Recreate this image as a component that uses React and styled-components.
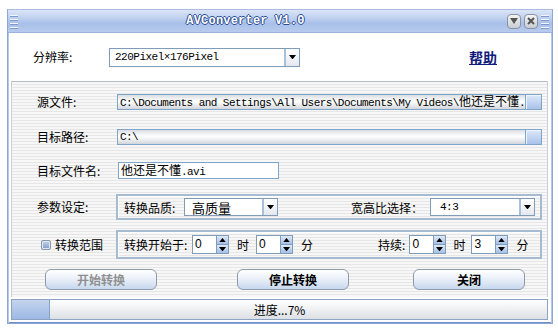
import React from "react";
import styled, { createGlobalStyle } from "styled-components";

const Global = createGlobalStyle`
  html, body {
    margin: 0;
    padding: 0;
    background: #ffffff;
  }
  body {
    font-family: "Noto Sans CJK SC", "Liberation Sans", sans-serif;
    font-size: 12px;
    color: #000;
  }
`;

const Page = styled.div`
  padding: 9px 0 0 7px;
  width: 558px;
  height: 328px;
  box-sizing: border-box;
`;

const Window = styled.div`
  width: 546px;
  height: 315px;
  box-sizing: border-box;
  border: 1px solid #8ea6d6;
  border-top-color: #a9bbe0;
  display: flex;
  flex-direction: column;
  background: #fff;
  box-shadow: inset 0 -1px 0 #6f8cc8;
`;

const TitleBar = styled.div`
  height: 22px;
  flex: none;
  display: flex;
  align-items: center;
  padding: 0 3px 0 2px;
  background: linear-gradient(#dbe5f7 0%, #bccfef 40%, #a8bfe9 60%, #b8cbee 100%);
  border-bottom: 1px solid #9bb2df;
`;

const Grip = styled.div`
  width: 8px;
  height: 14px;
  margin-top: 2px;
  background: repeating-linear-gradient(
    to bottom,
    #f2f6fd 0 1px,
    #7f99cc 1px 2px,
    transparent 2px 4px
  );
`;

const Title = styled.div`
  flex: 1;
  text-align: center;
  font-family: "Liberation Mono", monospace;
  font-weight: bold;
  font-size: 12px;
  color: #ffffff;
  letter-spacing: 0.2px;
  padding-right: 34px;
  text-shadow: 1px 0 0 #2a4d94, -1px 0 0 #2a4d94, 0 1px 0 #2a4d94, 0 -1px 0 #2a4d94;
`;

const CapButton = styled.div`
  width: 12px;
  height: 13px;
  margin-right: 3px;
  border-radius: 4px;
  border: 1px solid #8a93a3;
  background: linear-gradient(#f4f4f4, #c7ccd4);
  display: flex;
  align-items: center;
  justify-content: center;
`;

const Body = styled.div`
  flex: 1;
  display: flex;
  flex-direction: column;
  padding: 0 3px 3px 2px;
  border-left: 1px solid #b7c7e6;
  border-right: 1px solid #b7c7e6;
`;

const TopSection = styled.div`
  height: 48px;
  flex: none;
  display: flex;
  align-items: center;
  padding: 0 51px 0 22px;
  background: #fff;
`;

const Label = styled.div`
  width: ${(p) => p.$w || 76}px;
  flex: none;
  font-size: 12px;
  line-height: 16px;
  white-space: nowrap;
  padding-left: ${(p) => p.$pad || 0}px;
  box-sizing: border-box;
  display: flex;
  align-items: center;
`;

const Select = styled.div`
  width: ${(p) => p.$w}px;
  height: ${(p) => p.$h || 18}px;
  box-sizing: border-box;
  border: 1px solid #7f9db9;
  background: #fff;
  display: flex;
  align-items: center;
  flex: none;
`;

const SelectText = styled.div`
  flex: 1;
  padding-left: ${(p) => p.$pad || 5}px;
  font-family: ${(p) =>
    p.$mono ? '"Liberation Mono", "Noto Sans CJK SC", monospace' : '"Noto Sans CJK SC", sans-serif'};
  font-size: ${(p) => (p.$mono ? 11 : 13)}px;
  letter-spacing: ${(p) => (p.$mono ? -0.5 : 0)}px;
  white-space: nowrap;
`;

const DropButton = styled.div`
  width: 15px;
  height: 100%;
  box-sizing: border-box;
  border-left: 2px solid #a8c0dc;
  background: linear-gradient(#ffffff, #e4e8ee);
  display: flex;
  align-items: center;
  justify-content: center;
`;

const Help = styled.a`
  margin-left: auto;
  font-size: 14px;
  font-weight: bold;
  color: #101a7a;
  text-decoration: underline;
  cursor: pointer;
`;

const Panel = styled.div`
  flex: 1;
  border-top: 1px solid #b4bcc9;
  border-left: 1px solid #c9d0da;
  border-right: 1px solid #c9d0da;
  background: repeating-linear-gradient(
    to bottom,
    #f7f7f7 0 2px,
    #e6e6e6 2px 3px
  );
  display: flex;
  flex-direction: column;
`;

const Row = styled.div`
  height: ${(p) => p.$h}px;
  margin-top: ${(p) => p.$top}px;
  display: flex;
  align-items: center;
  padding-left: ${(p) => p.$left ?? 25}px;
`;

const PathBox = styled.div`
  width: ${(p) => p.$w}px;
  height: ${(p) => p.$h || 16}px;
  box-sizing: border-box;
  border: 1px solid #7fa6c8;
  display: flex;
  align-items: center;
  background: ${(p) =>
    p.$plain ? "#fff" : "linear-gradient(#d9dde2 0%, #ffffff 45%, #f4f5f6 60%, #d2d6dc 100%)"};
`;

const PathText = styled.div`
  flex: 1;
  min-width: 0;
  padding-left: 2px;
  font-family: "Liberation Mono", "Noto Sans CJK SC", monospace;
  font-size: 11px;
  letter-spacing: -0.55px;
  white-space: nowrap;
  overflow-x: clip;
  overflow-y: visible;
  line-height: 14px;
`;

const CjkSpan = styled.span`
  font-family: "Noto Sans CJK SC", sans-serif;
  font-size: 12px;
  letter-spacing: 0;
  line-height: 14px;
`;

const FileText = styled.div`
  padding-left: 2px;
  font-family: "Liberation Mono", "Noto Sans CJK SC", monospace;
  font-size: 11px;
  letter-spacing: -0.55px;
  white-space: nowrap;
`;

const BrowseButton = styled.div`
  width: 16px;
  height: 100%;
  flex: none;
  box-sizing: border-box;
  border-left: 1px solid #7fa6c8;
  background: linear-gradient(#dde8f8, #a9c2ea);
  box-shadow: inset 1px 1px 0 #eef4fd;
`;

const Group = styled.div`
  width: 426px;
  height: ${(p) => p.$h}px;
  box-sizing: border-box;
  border: 2px solid #a6bbd2;
  box-shadow: inset 1px 1px 0 #ffffff;
  display: flex;
  align-items: center;
  padding-left: 6px;
  flex: none;
`;

const GroupLabel = styled.div`
  font-size: 12px;
  white-space: nowrap;
  margin-left: ${(p) => p.$ml || 0}px;
  width: ${(p) => (p.$w ? `${p.$w}px` : "auto")};
  flex: none;
`;

const Check = styled.div`
  width: 10px;
  height: 10px;
  flex: none;
  box-sizing: border-box;
  border: 1px solid #8a97a8;
  border-radius: 2px;
  background: linear-gradient(#c6d4ea, #7f9cc8);
  box-shadow: inset 0 0 0 1px #dfe7f3;
  margin-right: 4px;
`;

const Spin = styled.div`
  display: flex;
  height: 19px;
  margin-left: ${(p) => p.$ml || 0}px;
  flex: none;
`;

const SpinField = styled.div`
  width: 24px;
  height: 100%;
  box-sizing: border-box;
  border: 1px solid #7f9db9;
  border-right: none;
  background: #fff;
  font-family: "Liberation Sans", sans-serif;
  font-size: 12px;
  line-height: 17px;
  padding-left: 2px;
`;

const SpinButtons = styled.div`
  width: 13px;
  display: flex;
  flex-direction: column;
  border: 1px solid #7f9db9;
  box-sizing: border-box;
`;

const SpinHalf = styled.div`
  flex: 1;
  background: linear-gradient(#dfe9f8, #a5bfe6);
  display: flex;
  align-items: center;
  justify-content: center;
  & + & {
    border-top: 1px solid #7f9db9;
  }
`;

const ButtonRow = styled.div`
  height: 21px;
  margin-top: 10px;
  display: flex;
  padding-left: 33px;
`;

const Button = styled.div`
  width: 112px;
  height: 21px;
  box-sizing: border-box;
  margin-left: ${(p) => p.$ml || 0}px;
  border: 1px solid #8f9aa9;
  border-radius: 6px;
  background: linear-gradient(#ffffff 0%, #eef3fa 40%, #c7d7ee 100%);
  display: flex;
  align-items: center;
  justify-content: center;
  font-size: 12px;
  font-weight: bold;
  color: ${(p) => (p.$disabled ? "#8f8f8f" : "#000")};
`;

const Progress = styled.div`
  height: 21px;
  margin-top: 2px;
  flex: none;
  position: relative;
  box-sizing: border-box;
  border: 1px solid #8ea3c2;
  background: linear-gradient(#ffffff, #f2f3f5 40%, #dcdfe4);
  display: flex;
  align-items: center;
  justify-content: center;
  font-size: 12px;
`;

const ProgressFill = styled.div`
  position: absolute;
  left: 0;
  top: 0;
  bottom: 0;
  background: linear-gradient(#c4d4ee, #9db8e4);
  border-right: 1px solid #7fa6c8;
`;

const ProgressText = styled.span`
  position: relative;
`;

const Tri = ({ down = true, size = 7 }) => (
  <svg width={size} height={size / 2 + 1} viewBox="0 0 8 5">
    {down ? <path d="M0 0 H8 L4 5 Z" fill="#000" /> : <path d="M0 5 H8 L4 0 Z" fill="#000" />}
  </svg>
);

const SpinBox = ({ value, ml }) => (
  <Spin $ml={ml}>
    <SpinField>{value}</SpinField>
    <SpinButtons>
      <SpinHalf>
        <Tri down={false} size={7} />
      </SpinHalf>
      <SpinHalf>
        <Tri size={7} />
      </SpinHalf>
    </SpinButtons>
  </Spin>
);

const progress = 7;

export default function App() {
  return (
    <Page>
      <Global />
      <Window>
        <TitleBar>
          <Grip />
          <Title>AVConverter V1.0</Title>
          <CapButton>
            <svg width="8" height="6" viewBox="0 0 8 6">
              <path d="M0 0 H8 L4 6 Z" fill="#555" />
            </svg>
          </CapButton>
          <CapButton>
            <svg width="8" height="8" viewBox="0 0 8 8">
              <path d="M1 1 L7 7 M7 1 L1 7" stroke="#555" strokeWidth="2" />
            </svg>
          </CapButton>
          <Grip />
        </TitleBar>
        <Body>
          <TopSection>
            <Label $w={76}>分辨率:</Label>
            <Select $w={191} $h={19}>
              <SelectText $mono $pad={5}>220Pixel×176Pixel</SelectText>
              <DropButton>
                <Tri />
              </DropButton>
            </Select>
            <Help>帮助</Help>
          </TopSection>
          <Panel>
            <Row $h={16} $top={12}>
              <Label $w={80}>源文件:</Label>
              <PathBox $w={425}>
                <PathText>
                  C:\Documents and Settings\All Users\Documents\My Videos\<CjkSpan>他还是不懂</CjkSpan>.rmvb
                </PathText>
                <BrowseButton />
              </PathBox>
            </Row>
            <Row $h={16} $top={19}>
              <Label $w={80}>目标路径:</Label>
              <PathBox $w={425}>
                <PathText>C:\</PathText>
                <BrowseButton />
              </PathBox>
            </Row>
            <Row $h={17} $top={17}>
              <Label $w={81}>目标文件名:</Label>
              <PathBox $w={161} $h={17} $plain>
                <FileText>
                  <CjkSpan>他还是不懂</CjkSpan>.avi
                </FileText>
              </PathBox>
            </Row>
            <Row $h={26} $top={15}>
              <Label $w={79}>参数设定:</Label>
              <Group $h={26}>
                <GroupLabel $w={60}>转换品质:</GroupLabel>
                <Select $w={94}>
                  <SelectText $pad={7}>高质量</SelectText>
                  <DropButton>
                    <Tri />
                  </DropButton>
                </Select>
                <GroupLabel $ml={73} $w={79}>宽高比选择：</GroupLabel>
                <Select $w={105}>
                  <SelectText $mono $pad={9}>4:3</SelectText>
                  <DropButton>
                    <Tri />
                  </DropButton>
                </Select>
              </Group>
            </Row>
            <Row $h={29} $top={10} $left={0}>
              <Label $w={104} $pad={29}>
                <Check />
                转换范围
              </Label>
              <Group $h={29}>
                <GroupLabel $w={68}>转换开始于:</GroupLabel>
                <SpinBox value="0" />
                <GroupLabel $ml={8}>时</GroupLabel>
                <SpinBox value="0" ml={7} />
                <GroupLabel $ml={8}>分</GroupLabel>
                <GroupLabel $ml={65}>持续:</GroupLabel>
                <SpinBox value="0" ml={4} />
                <GroupLabel $ml={7}>时</GroupLabel>
                <SpinBox value="3" ml={6} />
                <GroupLabel $ml={8}>分</GroupLabel>
              </Group>
            </Row>
            <ButtonRow>
              <Button $disabled>开始转换</Button>
              <Button $ml={80}>停止转换</Button>
              <Button $ml={64}>关闭</Button>
            </ButtonRow>
          </Panel>
          <Progress>
            <ProgressFill style={{ width: `${progress}%` }} />
            <ProgressText>进度...{progress}%</ProgressText>
          </Progress>
        </Body>
      </Window>
    </Page>
  );
}
